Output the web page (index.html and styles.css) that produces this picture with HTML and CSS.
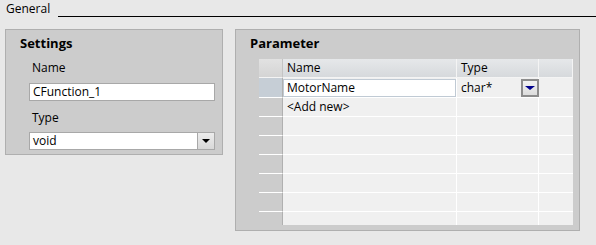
FILE: index.html
```html
<!DOCTYPE html>
<html lang="en">
<head>
    <meta charset="UTF-8">
    <title>General</title>
    <link rel="stylesheet" href="styles.css">
</head>
<body>
    <div class="section-head">
        <span>General</span>
        <div class="rule"></div>
    </div>

    <div class="panels">
        <div class="panel settings">
            <div class="panel-title">Settings</div>
            <div class="label">Name</div>
            <div class="field">CFunction_1</div>
            <div class="label">Type</div>
            <div class="field select">
                <span>void</span>
                <span class="drop"><i class="tri"></i></span>
            </div>
        </div>

        <div class="panel params">
            <div class="panel-title">Parameter</div>
            <div class="grid">
                <div class="row head">
                    <div class="c idx"></div>
                    <div class="c name">Name</div>
                    <div class="c type">Type</div>
                    <div class="c extra"></div>
                </div>
                <div class="row sel">
                    <div class="c idx"></div>
                    <div class="c name"><div class="edit">MotorName</div></div>
                    <div class="c type">char*<span class="drop blue"><i class="tri"></i></span></div>
                    <div class="c extra"></div>
                </div>
                <div class="row">
                    <div class="c idx"></div>
                    <div class="c name">&lt;Add new&gt;</div>
                    <div class="c type"></div>
                    <div class="c extra"></div>
                </div>
                <div class="row"><div class="c idx"></div><div class="c name"></div><div class="c type"></div><div class="c extra"></div></div>
                <div class="row"><div class="c idx"></div><div class="c name"></div><div class="c type"></div><div class="c extra"></div></div>
                <div class="row"><div class="c idx"></div><div class="c name"></div><div class="c type"></div><div class="c extra"></div></div>
                <div class="row"><div class="c idx"></div><div class="c name"></div><div class="c type"></div><div class="c extra"></div></div>
                <div class="row"><div class="c idx"></div><div class="c name"></div><div class="c type"></div><div class="c extra"></div></div>
                <div class="row last"><div class="c idx"></div><div class="c name"></div><div class="c type"></div><div class="c extra"></div></div>
            </div>
        </div>
    </div>
</body>
</html>
```
FILE: styles.css
```css
body {
    margin: 0;
    background: #e8e8e8;
    font-family: "Open Sans", "Noto Sans", sans-serif;
    font-size: 12px;
    color: #000;
    width: 596px;
    height: 245px;
    overflow: hidden;
}

.section-head {
    display: flex;
    align-items: flex-end;
    gap: 8px;
    padding: 1px 0 0 6px;
    height: 16px;
}

.section-head span {
    line-height: 16px;
}

.rule {
    flex: 1;
    border-bottom: 1px solid #000;
}

.panels {
    display: flex;
    align-items: flex-start;
    gap: 12px;
    margin: 12px 0 0 5px;
}

.panel {
    background: #cccccc;
    border: 1px solid #afafaf;
    box-sizing: border-box;
}

.panel-title {
    font-weight: bold;
    font-size: 13px;
    line-height: 16px;
}

/* linke Box */
.settings {
    width: 218px;
    height: 126px;
    padding: 5px 0 0 23px;
}

.settings .panel-title {
    margin-left: -9px;
}

.label {
    margin: 9px 0 0 3px;
    line-height: 16px;
}

.field {
    width: 186px;
    height: 18px;
    box-sizing: border-box;
    background: #fff;
    border: 1px solid #a8a8a8;
    padding-left: 3px;
    line-height: 16px;
    margin-top: 7px;
}

.select {
    display: flex;
    justify-content: space-between;
    padding-right: 0;
    margin-top: 6px;
}

.drop {
    width: 17px;
    height: 16px;
    box-sizing: border-box;
    border-left: 1px solid #a8a8a8;
    background: linear-gradient(#ececec, #d8d8d8);
    display: flex;
    align-items: center;
    justify-content: center;
}

.tri {
    width: 0;
    height: 0;
    border-left: 4px solid transparent;
    border-right: 4px solid transparent;
    border-top: 4px solid #000;
}

/* rechte Box */
.params {
    width: 345px;
    height: 202px;
    padding: 5px 0 0 14px;
}

.grid {
    margin: 8px 0 0 9px;
    width: 314px;
    height: 166px;
    overflow: hidden;
}

.row {
    display: flex;
    height: 19px;
}

.c {
    box-sizing: border-box;
    height: 19px;
    line-height: 18px;
    background: #f0f0f0;
    border-bottom: 1px solid #fff;
    border-right: 1px solid #fff;
    padding-left: 4px;
    position: relative;
}

.idx {
    width: 24px;
    background: #cccccc;
    border-right: 1px solid #b0b0b0;
}

.name { width: 174px; }
.type { width: 82px; padding-left: 4px; }
.extra { width: 34px; border-right: none; }

.head .c {
    background: linear-gradient(#e6e8ea, #d6d9dc);
    border-bottom: 1px solid #f4f4f4;
    border-right: 1px solid #f4f4f4;
    height: 19px;
}

.head .idx {
    background: linear-gradient(#e2e2e2, #d4d4d4);
    border-right: 1px solid #c4c4c4;
}

.row.sel {
    height: 20px;
}

.sel .c {
    height: 20px;
    line-height: 19px;
}

.sel .idx {
    background: #c6ced6;
}

.sel .name {
    padding: 1px 0 1px 0;
}

.edit {
    background: #fff;
    border: 1px solid #c0cad4;
    height: 18px;
    box-sizing: border-box;
    line-height: 16px;
    padding-left: 3px;
}

.drop.blue {
    position: absolute;
    left: 64px;
    top: 1px;
    height: 18px;
    width: 18px;
    border: 2px solid #8c8c8c;
    background: linear-gradient(#f2f2f2, #dcdcdc);
}

.drop.blue .tri {
    border-top-color: #00008c;
    border-left-width: 5px;
    border-right-width: 5px;
}

.last .c {
    border-bottom: none;
}
```
